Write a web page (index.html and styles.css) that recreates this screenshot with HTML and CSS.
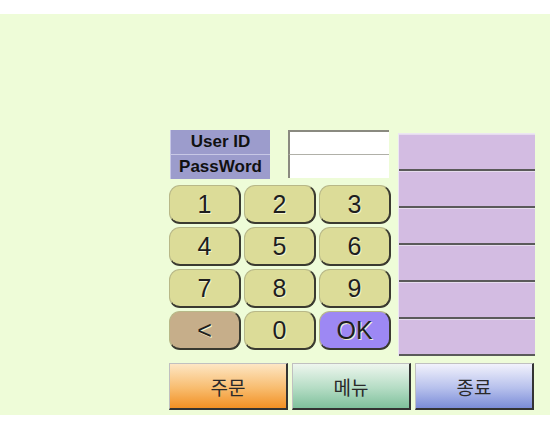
FILE: index.html
```html
<!DOCTYPE html>
<html lang="ko">
<head>
    <meta charset="UTF-8">
    <title>로그인</title>
    <link rel="stylesheet" href="styles.css">
</head>
<body>
    <div class="screen">
        <div class="main">
            <div class="left">
                <div class="login">
                    <div class="labels">
                        <div class="label">User ID</div>
                        <div class="label">PassWord</div>
                    </div>
                    <div class="inputs">
                        <input type="text" class="field">
                        <input type="password" class="field">
                    </div>
                </div>
                <div class="keypad">
                    <button class="key">1</button>
                    <button class="key">2</button>
                    <button class="key">3</button>
                    <button class="key">4</button>
                    <button class="key">5</button>
                    <button class="key">6</button>
                    <button class="key">7</button>
                    <button class="key">8</button>
                    <button class="key">9</button>
                    <button class="key back">&lt;</button>
                    <button class="key">0</button>
                    <button class="key ok">OK</button>
                </div>
            </div>
            <div class="list">
                <div class="cell"></div>
                <div class="cell"></div>
                <div class="cell"></div>
                <div class="cell"></div>
                <div class="cell"></div>
                <div class="cell"></div>
            </div>
        </div>
        <div class="actions">
            <button class="act order">주문</button>
            <button class="act menu">메뉴</button>
            <button class="act quit">종료</button>
        </div>
    </div>
</body>
</html>
```

FILE: styles.css
```css
body {
    margin: 0;
    background: #fff;
    font-family: "Liberation Sans", Arial, sans-serif;
}
.screen {
    margin-top: 14px;
    height: 401px;
    box-sizing: border-box;
    background: #eefcd8;
    padding: 116px 0 0 169px;
}
.main { display: flex; gap: 7px; }
.left { width: 222px; }

.login { display: flex; gap: 18px; padding-left: 1px; }
.labels {
    width: 100px;
    background: #9c9ccc;
    border-left: 1px solid #c8c8e6;
    box-sizing: border-box;
}
.label {
    height: 24px;
    line-height: 24px;
    text-align: center;
    font-weight: bold;
    font-size: 17px;
    color: #111;
}
.label + .label { border-top: 1px solid #c8c8e6; }
.inputs { display: flex; flex-direction: column; width: 101px; }
.field {
    height: 24px;
    margin: 0;
    padding: 0;
    background: #fff;
    border: none;
    border-left: 2px solid #8a8a80;
    border-top: 2px solid #8a8a80;
    box-sizing: border-box;
}
.field + .field { height: 24px; border-top: 1px solid #b0b0a8; }

.keypad {
    margin-top: 6px;
    display: grid;
    grid-template-columns: repeat(3, 72px);
    grid-auto-rows: 39px;
    gap: 3px;
}
.key {
    margin: 0;
    padding: 0;
    border: 1px solid #b8b888;
    border-right: 2px solid #3a3a30;
    border-bottom: 2px solid #3a3a30;
    border-radius: 11px;
    background: #dcdc98;
    font-family: "Liberation Sans", Arial, sans-serif;
    font-size: 25px;
    color: #1e1e1e;
    text-shadow: 1px 1px 0 #f4f4d0;
}
.key.back { background: #c6ae8a; }
.key.ok { background: #9d88f4; }

.list {
    margin-top: 3px;
    width: 137px;
    border-left: 1px solid #ece6f2;
    border-top: 1px solid #ece6f2;
    box-sizing: border-box;
}
.cell {
    height: 34px;
    background: #d3bce2;
    border-bottom: 2px solid #5a5a5a;
    border-top: 1px solid #e6dcee;
}

.actions {
    margin-top: 7px;
    display: flex;
    gap: 4px;
}
.act {
    width: 119px;
    height: 47px;
    margin: 0;
    padding: 0;
    border: 1px solid #c0c0c0;
    border-right: 2px solid #333;
    border-bottom: 2px solid #333;
    font-family: "Noto Sans CJK KR", sans-serif;
    font-size: 19px;
    color: #2a2a2a;
}
.act.order { background: linear-gradient(#fde6c4, #f8bc6e 55%, #f29024); }
.act.menu { background: linear-gradient(#eef6ee, #b4dcc4 55%, #7fc09c); }
.act.quit { background: linear-gradient(#f2f2fc, #b6c0ec 55%, #7b8cd8); }
```
